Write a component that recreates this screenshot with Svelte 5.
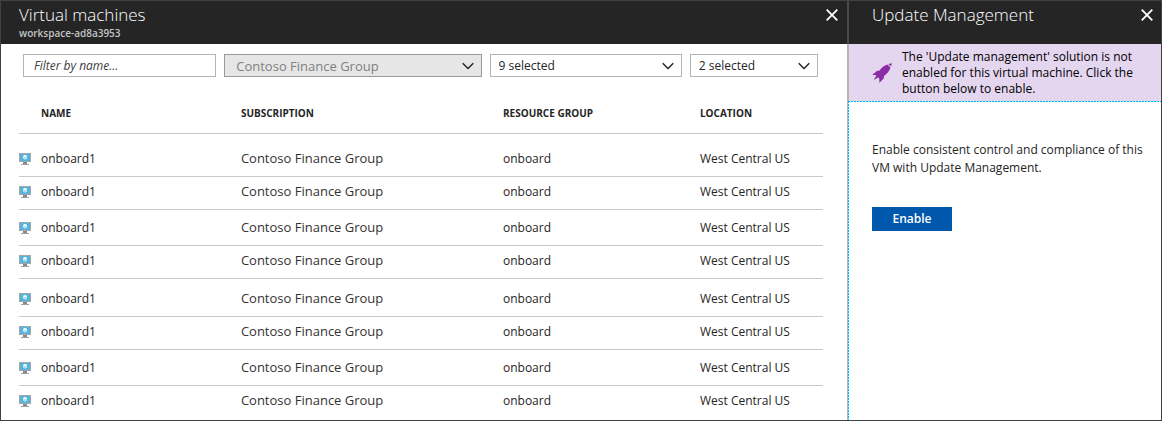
<script>
  const rows = ['xl', 'sm', 'md', 'sm', 'lg', 'sm', 'md', 'sm'].map((space) => ({
    space,
    name: 'onboard1',
    subscription: 'Contoso Finance Group',
    group: 'onboard',
    location: 'West Central US'
  }));

  const filters = [
    { id: 'subscription', label: 'Subscription', value: 'Contoso Finance Group', disabled: true },
    { id: 'group', label: 'Resource group', value: '9 selected', disabled: false },
    { id: 'location', label: 'Location', value: '2 selected', disabled: false }
  ];
</script>

{#snippet closeButton()}
  <button class="close" type="button" aria-label="Close">
    <svg width="12" height="12" viewBox="0 0 12 12" aria-hidden="true">
      <path d="M0.7 0.7 11.3 11.3M11.3 0.7 0.7 11.3" stroke="#fff" stroke-width="1.8" fill="none" />
    </svg>
  </button>
{/snippet}

<div class="page">
  <main class="blade">
    <header>
      <div>
        <h1>Virtual machines</h1>
        <p class="workspace">workspace-ad8a3953</p>
      </div>
      {@render closeButton()}
    </header>

    <form class="filters">
      <input type="text" placeholder="Filter by name..." aria-label="Filter by name" />
      {#each filters as filter (filter.id)}
        <div class="dropdown">
          <select aria-label={filter.label} disabled={filter.disabled}>
            <option>{filter.value}</option>
          </select>
          <svg width="12" height="8" viewBox="0 0 12 8" aria-hidden="true">
            <path d="M0.7 1.2 6 6.4 11.3 1.2" stroke="#222" stroke-width="1.4" fill="none" />
          </svg>
        </div>
      {/each}
    </form>

    <div class="list">
      <table>
        <colgroup>
          <col class="c-name" />
          <col class="c-subscription" />
          <col class="c-group" />
          <col class="c-location" />
        </colgroup>
        <thead>
          <tr>
            <th class="first" scope="col">NAME</th>
            <th scope="col">SUBSCRIPTION</th>
            <th scope="col">RESOURCE GROUP</th>
            <th scope="col">LOCATION</th>
          </tr>
        </thead>
        <tbody>
          {#each rows as row}
            <tr class={row.space}>
              <td>
                <div class="vm">
                  <svg width="12" height="12" viewBox="0 0 12 12" aria-hidden="true">
                    <rect width="12" height="9" fill="#a0a8ac" />
                    <rect x="1" y="1" width="10" height="7" fill="#55b4da" />
                    <path d="M6 2 8 3V5.6L6 6.7 4 5.6V3Z" fill="#c9e9f6" />
                    <path d="M6 2 8 3 6 4.1 4 3Z" fill="#fff" />
                    <path d="M6 4.1V6.7" stroke="#7cc6e4" stroke-width="0.6" />
                    <path d="M4 9h4v2h-4z" fill="#85898c" />
                    <path d="M2 11h8v1h-8z" fill="#a0a3a5" />
                  </svg>
                  {row.name}
                </div>
              </td>
              <td class="subscription-name">{row.subscription}</td>
              <td>{row.group}</td>
              <td>{row.location}</td>
            </tr>
          {/each}
        </tbody>
      </table>
    </div>
  </main>

  <aside class="blade update">
    <header>
      <h2>Update Management</h2>
      {@render closeButton()}
    </header>
    <div class="banner">
      <svg width="20" height="20" viewBox="0 0 20 20" aria-hidden="true">
        <path d="M19.8 0.2 19.1 3.6 16.3 0.9Z" fill="#8a2da5" />
        <path d="M15.4 1.5 18.5 4.6C17.6 7.6 15.4 10.6 12.2 12.8L11.7 15.4 7.4 19.7 7.3 15.6 6.2 14.6 1.7 16.9 4.3 12.7 3.8 12.1 0.2 11.9 4.8 8 7.6 7.6C9.6 4.6 12 2.4 15.4 1.5Z" fill="#8a2da5" />
      </svg>
      <p>The 'Update management' solution is not enabled for this virtual machine. Click the button below to enable.</p>
    </div>
    <div class="content">
      <p>Enable consistent control and compliance of this VM with Update Management.</p>
      <button class="enable" type="button">Enable</button>
    </div>
  </aside>
</div>

<style>
  :global(body) {
    margin: 0;
    background: #fff;
  }

  .page,
  .page :global(*) {
    box-sizing: border-box;
  }

  .page {
    display: flex;
    min-height: 100vh;
    border: 1px solid #424242;
    background: #fff;
    color: #252525;
    font-family: 'Open Sans', 'Noto Sans', sans-serif;
    font-size: 12px;
    line-height: 16px;
  }

  h1,
  h2,
  p {
    margin: 0;
  }

  .blade {
    flex: 1;
    min-width: 0;
  }

  .update {
    display: flex;
    flex: 0 0 314px;
    flex-direction: column;
  }

  header {
    display: flex;
    align-items: flex-start;
    justify-content: space-between;
    height: 43px;
    padding: 2px 9px 0 18px;
    background: #252525;
    color: #fff;
  }

  .update header {
    padding-right: 8px;
    padding-left: 23px;
    border-left: 2px solid #4a4a4a;
  }

  h1,
  h2 {
    font-size: 17px;
    font-weight: 300;
    line-height: 24px;
  }

  .workspace {
    color: #c4c4c4;
    font-size: 10px;
    font-weight: 600;
    line-height: 12px;
  }

  .close {
    display: flex;
    margin-top: 6px;
    padding: 0;
    border: 0;
    background: none;
  }

  .filters {
    display: grid;
    grid-template-columns: 193fr 257fr 192fr 128fr;
    gap: 8px;
    padding: 10px 29px 0 22px;
  }

  input,
  select {
    width: 100%;
    min-width: 0;
    height: 23px;
    border: 1px solid #b4b4b4;
    border-radius: 0;
    background: #fff;
    color: #252525;
    font: inherit;
  }

  input {
    padding: 0 10px;
    font-style: italic;
  }

  input::placeholder {
    color: #404040;
    opacity: 1;
  }

  select {
    grid-area: 1 / 1;
    padding: 0 24px 0 8px;
    appearance: none;
  }

  select:disabled {
    padding-left: 11px;
    border-color: #999;
    background: #e6e6e6;
    color: #808080;
    font-size: 13px;
    opacity: 1;
  }

  .dropdown {
    display: grid;
    align-items: center;
    min-width: 0;
  }

  .dropdown svg {
    grid-area: 1 / 1;
    justify-self: end;
    margin-right: 8px;
    pointer-events: none;
  }

  .list {
    padding: 24px 24px 0 18px;
  }

  table {
    width: 100%;
    border-spacing: 0;
    table-layout: fixed;
  }

  .c-name {
    width: 27.6%;
  }

  .c-subscription {
    width: 32.6%;
  }

  .c-group {
    width: 24.5%;
  }

  th,
  td {
    padding: 0 0 9px;
    border-bottom: 1px solid #c8c8c8;
    text-align: left;
    white-space: nowrap;
  }

  th {
    padding: 4px 0 12px;
    font-size: 10px;
    font-weight: 700;
  }

  th.first {
    padding-left: 22px;
  }

  .sm td {
    padding-top: 7px;
  }

  .md td {
    padding-top: 10px;
  }

  .lg td {
    padding-top: 12px;
  }

  .xl td {
    padding-top: 17px;
  }

  tbody tr:last-child td {
    border-bottom: 0;
  }

  td.subscription-name {
    color: #333;
    font-size: 13px;
    line-height: 14px;
    vertical-align: top;
  }

  .vm {
    display: flex;
    align-items: center;
    gap: 10px;
  }

  .banner {
    display: flex;
    align-items: center;
    gap: 10px;
    padding: 5px 24px 4px 23px;
    border-left: 2px solid #b5b5b0;
    background: #e5d6f0;
    color: #000;
  }

  .banner svg {
    flex: none;
  }

  /* Fine 2px-on, 1px-off dashes along the top and left edges. */
  .content {
    flex: 1;
    padding: 40px 12px 24px 24px;
    border-left: 1px solid #b5b5b0;
    background:
      repeating-linear-gradient(90deg, #00b9f2 0 2px, #c4e9f7 2px 3px) top / 100% 1px no-repeat,
      repeating-linear-gradient(180deg, #00b9f2 0 2px, #c4e9f7 2px 3px) left / 1px 100% no-repeat;
  }

  .content p {
    line-height: 18px;
  }

  .enable {
    min-width: 80px;
    height: 24px;
    margin-top: 30px;
    padding: 0 16px;
    border: 0;
    background: #0058ad;
    color: #fff;
    font: inherit;
    font-weight: 600;
  }
</style>
